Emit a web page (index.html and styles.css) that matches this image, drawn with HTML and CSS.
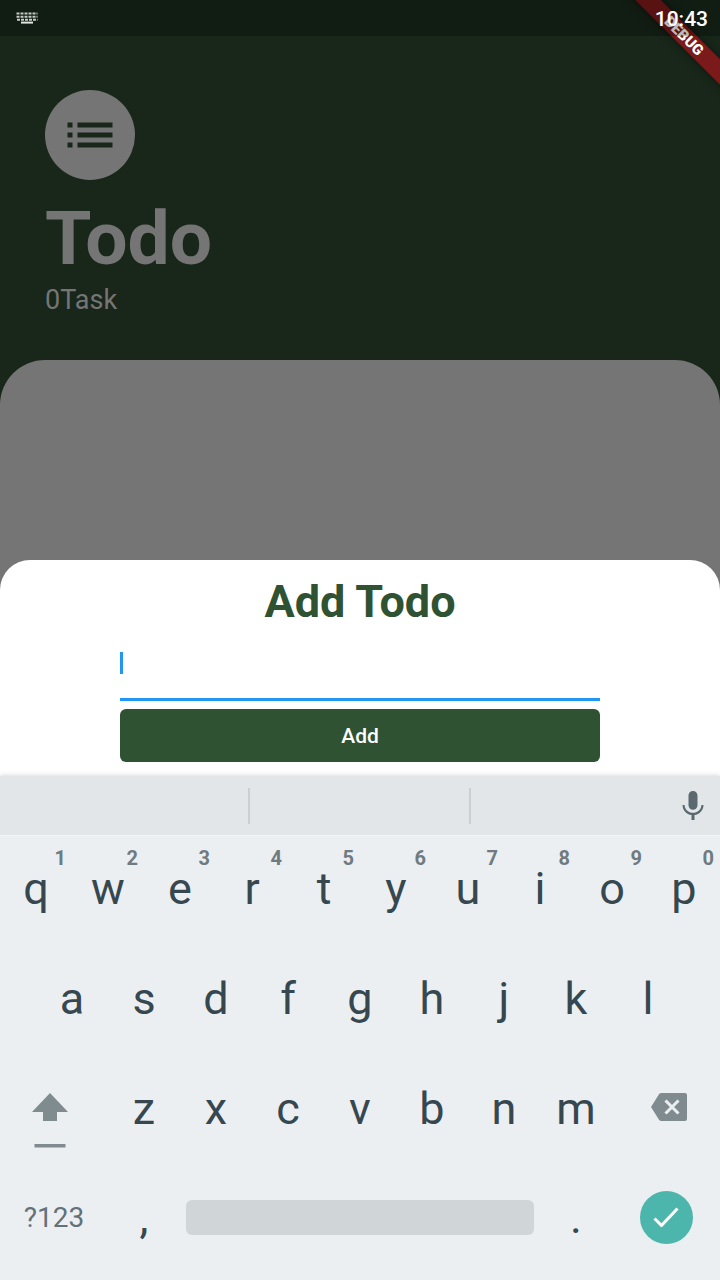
FILE: index.html
```
<!DOCTYPE html>
<html lang="en">
<head>
<meta charset="utf-8">
<meta name="viewport" content="width=device-width, initial-scale=1">
<title>Todo</title>
<link rel="stylesheet" href="styles.css">
</head>
<body>
<div class="app">
  <div class="banner" aria-hidden="true"><span class="banner-band">DEBUG</span></div>
  <div class="status-bar">
    <svg class="status-icon" viewBox="0 0 22 12" aria-hidden="true">
      <path class="keys-row" d="M.5 1.500H21.500M.5 4.700H21.500"/>
      <path class="keys-row" d="M1 7.700H21.500"/>
      <path class="keys-space" d="M5 10.600H17"/>
    </svg>
    <time class="clock">10:43</time>
  </div>

  <header class="header">
    <div class="avatar">
      <svg viewBox="0 0 24 24" aria-hidden="true"><path d="M3 13h2v-2H3zm0 4h2v-2H3zm0-8h2V7H3zm4 4h14v-2H7zm0 4h14v-2H7zM7 7v2h14V7z"/></svg>
    </div>
    <h1 class="title">Todo</h1>
    <p class="count">0Task</p>
  </header>

  <main class="panel"></main>

  <form class="sheet" onsubmit="return false">
    <h2 class="sheet-title"><label for="todo">Add Todo</label></h2>
    <div class="field">
      <input class="field-input" id="todo" type="text" autocomplete="off">
      <span class="caret"></span>
    </div>
    <button class="add" type="submit">Add</button>
  </form>

  <section class="keyboard" aria-label="Keyboard">
    <div class="suggestions">
      <div class="slot"></div>
      <div class="slot"></div>
      <div class="slot slot-mic">
        <button class="mic" type="button" aria-label="Voice input">
          <svg viewBox="0 0 24 24" aria-hidden="true"><path d="M12 14.500c1.660 0 3-1.340 3-3V5c0-1.660-1.340-3-3-3S9 3.340 9 5v6.500c0 1.660 1.340 3 3 3zm5.600-3.200c0 3-2.600 5.200-5.600 5.200S6.400 14.300 6.400 11.300H5c0 3.410 2.720 6.230 6 6.720V21.300h2v-3.280c3.280-.48 6-3.300 6-6.720z"/></svg>
        </button>
      </div>
    </div>
    <div class="rows">
      <div class="row">
        <button class="key" type="button">q<span class="hint">1</span></button>
        <button class="key" type="button">w<span class="hint">2</span></button>
        <button class="key" type="button">e<span class="hint">3</span></button>
        <button class="key" type="button">r<span class="hint">4</span></button>
        <button class="key" type="button">t<span class="hint">5</span></button>
        <button class="key" type="button">y<span class="hint">6</span></button>
        <button class="key" type="button">u<span class="hint">7</span></button>
        <button class="key" type="button">i<span class="hint">8</span></button>
        <button class="key" type="button">o<span class="hint">9</span></button>
        <button class="key" type="button">p<span class="hint">0</span></button>
      </div>
      <div class="row row-inset">
        <button class="key" type="button">a</button>
        <button class="key" type="button">s</button>
        <button class="key" type="button">d</button>
        <button class="key" type="button">f</button>
        <button class="key" type="button">g</button>
        <button class="key" type="button">h</button>
        <button class="key" type="button">j</button>
        <button class="key" type="button">k</button>
        <button class="key" type="button">l</button>
      </div>
      <div class="row">
        <button class="key key-wide key-shift" type="button" aria-label="Shift">
          <svg class="shift-icon" viewBox="0 0 36 56" aria-hidden="true"><path d="M18 0 36 19H25V28H11V19H0zM2.500 51h31v3.500h-31z"/></svg>
        </button>
        <button class="key" type="button">z</button>
        <button class="key" type="button">x</button>
        <button class="key" type="button">c</button>
        <button class="key" type="button">v</button>
        <button class="key" type="button">b</button>
        <button class="key" type="button">n</button>
        <button class="key" type="button">m</button>
        <button class="key key-wide key-delete" type="button" aria-label="Backspace">
          <svg class="delete-icon" viewBox="0 0 36 28" aria-hidden="true"><path class="delete-body" d="M10.500 0H34a2 2 0 0 1 2 2V26a2 2 0 0 1-2 2H10.500a3 3 0 0 1-2.500-1.300L0 14 8 1.300A3 3 0 0 1 10.500 0z"/><path class="delete-cross" d="m14.500 7.500 13 13M27.500 7.500l-13 13"/></svg>
        </button>
      </div>
      <div class="row row-bottom">
        <button class="key key-wide key-symbols" type="button">?123</button>
        <button class="key" type="button">,</button>
        <button class="key key-space" type="button" aria-label="Space"><span class="space-bar"></span></button>
        <button class="key" type="button">.</button>
        <button class="key key-wide" type="button" aria-label="Done">
          <span class="done"><svg viewBox="0 0 26 20" aria-hidden="true"><path d="m1.500 11.500 7 7L24.500 1.500"/></svg></span>
        </button>
      </div>
    </div>
  </section>
</div>
</body>
</html>
```
FILE: styles.css
```
* {
  box-sizing: border-box;
}

body {
  margin: 0;
  font-family: Roboto, "Liberation Sans", sans-serif;
}

button {
  padding: 0;
  border: 0;
  background: none;
  font: inherit;
  color: inherit;
}

svg {
  display: block;
}

.app {
  position: relative;
  display: flex;
  flex-direction: column;
  min-height: 100vh;
  overflow: hidden;
  background: #18271a;
}

/* Corner ribbon */
.banner {
  position: absolute;
  top: 0;
  right: 0;
  width: 120px;
  height: 120px;
  overflow: hidden;
}

.banner-band {
  position: absolute;
  top: 27px;
  left: -16px;
  width: 200px;
  height: 18px;
  background: #7a1a1a;
  box-shadow: 0 0 9px rgba(0, 0, 0, 0.5);
  color: #fff;
  font-size: 15px;
  font-weight: 900;
  line-height: 18px;
  text-align: center;
  transform: rotate(45deg);
}

.status-bar {
  position: relative;
  display: flex;
  align-items: center;
  justify-content: space-between;
  height: 36px;
  padding: 0 12px 0 16px;
  background: rgba(0, 0, 0, 0.27);
}

.status-icon {
  width: 22px;
  height: 12px;
  fill: none;
}

.keys-row {
  stroke: #c5cac6;
  stroke-width: 2;
  stroke-dasharray: 3 1;
}

.keys-space {
  stroke: #e2e5e2;
  stroke-width: 2;
}

.clock {
  padding-top: 2px;
  color: #fff;
  font-size: 21px;
  font-weight: 500;
  line-height: 34px;
}

.header {
  padding: 54px 45px 44px;
  color: #757575;
}

.avatar {
  display: grid;
  place-items: center;
  width: 90px;
  height: 90px;
  border-radius: 50%;
  background: #757575;
}

.avatar svg {
  width: 60px;
  height: 60px;
  fill: #18271a;
}

.title {
  margin: 14px 0 2px;
  font-size: 75px;
  font-weight: 700;
  line-height: 88px;
}

.count {
  margin: 0;
  font-size: 27px;
  line-height: 32px;
}

.panel {
  flex: 1;
  min-height: 90px;
  border-radius: 45px 45px 0 0;
  background: #757575;
}

/* Bottom sheet, tucked over the end of the panel */
.sheet {
  display: flex;
  flex-direction: column;
  margin-top: -30px;
  padding: 15px 120px 14px;
  border-radius: 30px 30px 0 0;
  background: #fff;
}

.sheet-title {
  margin: 0;
  color: #2f5233;
  font-size: 45px;
  font-weight: 700;
  line-height: 53px;
  text-align: center;
}

.field {
  position: relative;
}

.field-input {
  display: block;
  width: 100%;
  height: 73px;
  padding: 0;
  border: 0;
  border-bottom: 3px solid #2196f3;
  border-radius: 0;
  outline: 0;
  background: none;
  font: inherit;
  font-size: 24px;
}

.caret {
  position: absolute;
  top: 24px;
  left: 0;
  width: 3px;
  height: 22px;
  background: #2196f3;
}

.add {
  height: 53px;
  margin-top: 8px;
  border-radius: 6px;
  background: #2f5233;
  color: #fff;
  font-size: 21px;
  font-weight: 500;
}

/* On-screen keyboard */
.keyboard {
  position: relative;
  background: #ebeff2;
  box-shadow: 0 0 5px rgba(0, 0, 0, 0.2);
  color: #37474f;
}

.suggestions {
  display: grid;
  grid-template-columns: 250fr 221fr 249fr;
  align-items: center;
  height: 60px;
  border-bottom: 1px solid #f2f5f7;
  background: #e2e6e9;
}

.slot {
  height: 36px;
  border-right: 2px solid #cacfd1;
}

.suggestions .slot-mic {
  display: flex;
  justify-content: flex-end;
  padding-right: 9px;
  border: 0;
}

.mic svg {
  width: 36px;
  height: 36px;
  fill: #5a686f;
}

.rows {
  padding-bottom: 4px;
}

.row {
  display: grid;
  grid-template-columns: repeat(20, 1fr);
}

.row-inset {
  grid-template-columns: repeat(18, 1fr);
  padding: 0 5%;
}

.key {
  position: relative;
  display: flex;
  grid-column: span 2;
  align-items: center;
  justify-content: center;
  height: 110px;
  padding-bottom: 6px;
  font-size: 45px;
}

.key-wide {
  grid-column: span 3;
}

.key-space {
  grid-column: span 10;
  padding: 0 6px;
}

.row-bottom .key {
  padding-bottom: 8px;
}

.hint {
  position: absolute;
  top: 12px;
  right: 6px;
  color: #6f7b80;
  font-size: 20px;
  font-weight: 700;
  line-height: 20px;
}

.key-shift {
  align-items: flex-start;
  padding: 37px 8px 0 0;
}

.shift-icon {
  width: 36px;
  height: 56px;
  fill: #808b8f;
}

.key-delete {
  align-items: flex-start;
  padding: 37px 0 0 6px;
}

.delete-icon {
  width: 36px;
  height: 28px;
}

.delete-body {
  fill: #808b8f;
}

.delete-cross {
  fill: none;
  stroke: #ebeff2;
  stroke-width: 3;
}

.key-symbols {
  color: #62717a;
  font-size: 28px;
}

.space-bar {
  flex: 1;
  height: 35px;
  border-radius: 6px;
  background: #d0d5d8;
}

.done {
  display: grid;
  place-items: center;
  width: 53px;
  height: 53px;
  border-radius: 50%;
  background: #4db6ac;
}

.done svg {
  width: 26px;
  height: 20px;
  fill: none;
  stroke: #fff;
  stroke-width: 3;
}
```
